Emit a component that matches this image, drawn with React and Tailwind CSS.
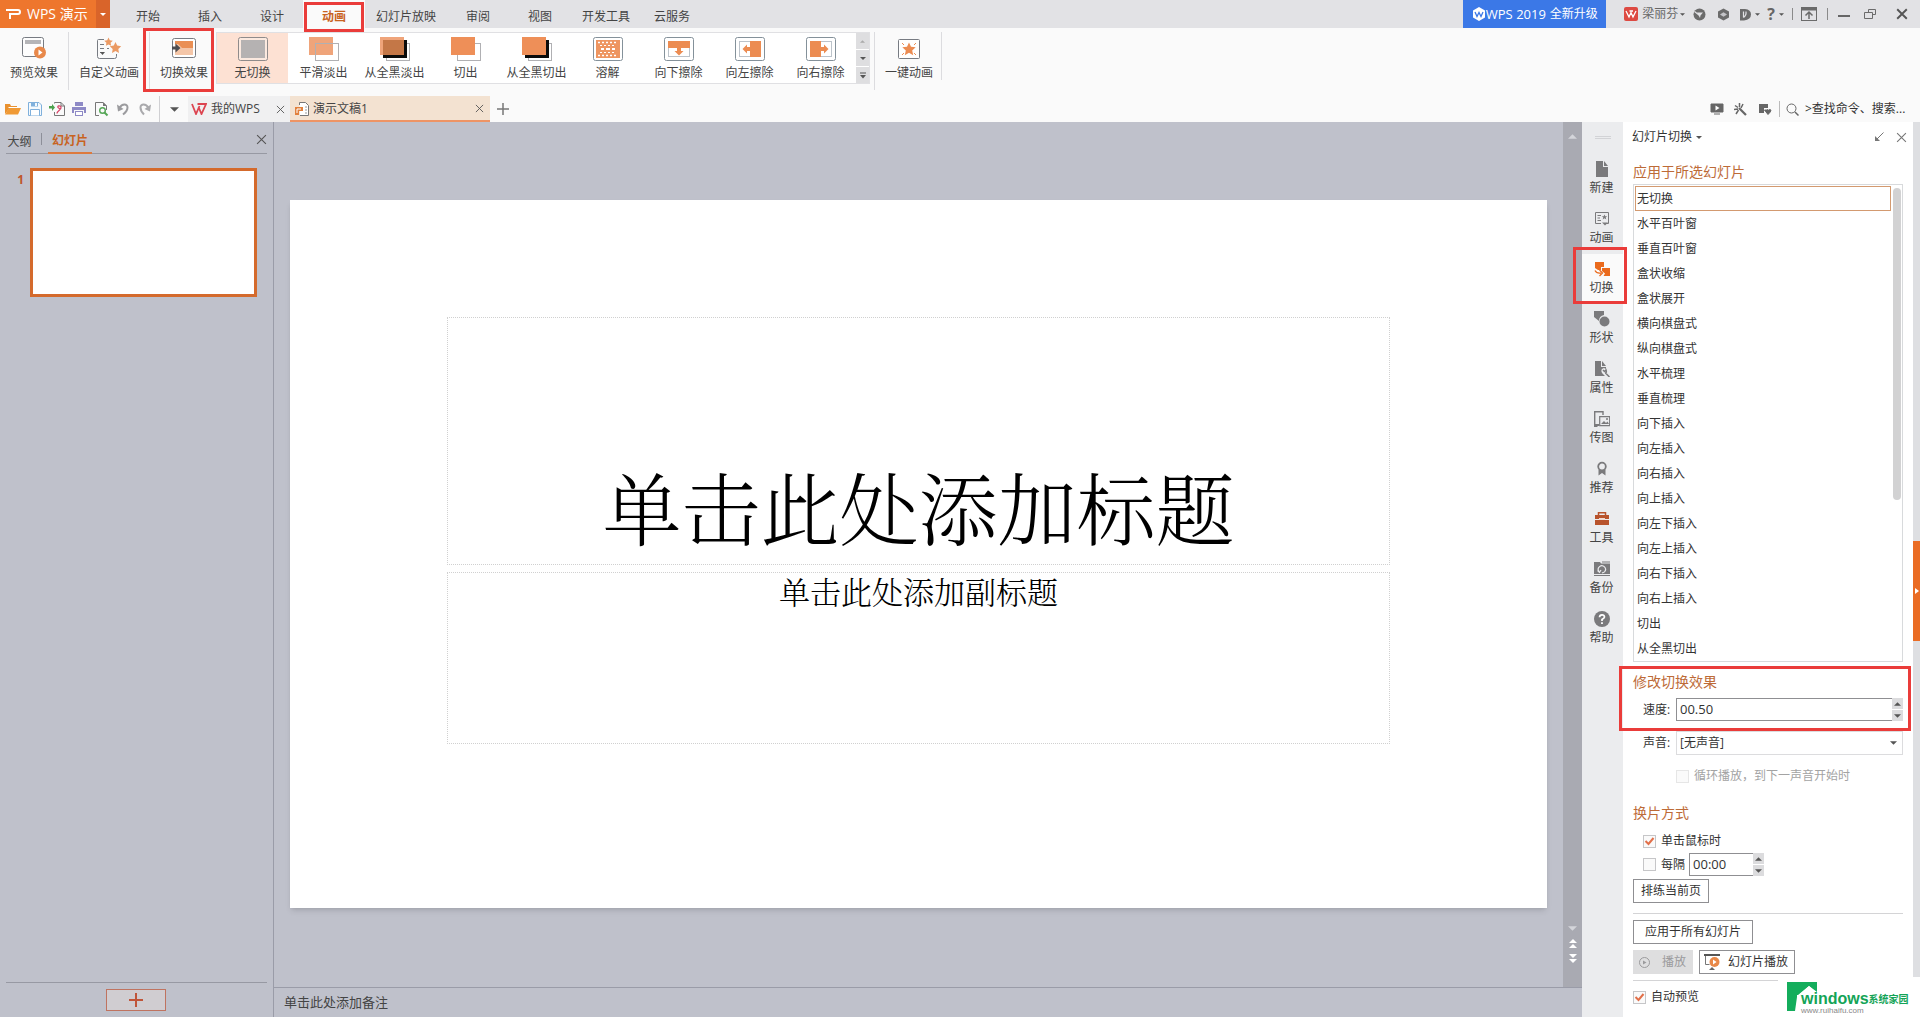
import React from "react";

const DARK = "#6b6b6b";

function Svg({ w = 16, h = 16, vb, children, className = "" }) {
  return (
    <svg width={w} height={h} viewBox={vb || `0 0 ${w} ${h}`} fill="none" className={`shrink-0 ${className}`} aria-hidden="true">
      {children}
    </svg>
  );
}

function Caret({ up = false, w = 7, h = 4, color = "#555" }) {
  return (
    <Svg w={w} h={h} vb="0 0 8 4">
      <path d={up ? "M0 4L4 0L8 4z" : "M0 0L4 4L8 0z"} fill={color} />
    </Svg>
  );
}

function Cross({ size = 10, color = "#555", sw = 1 }) {
  return (
    <Svg w={size} h={size} vb="0 0 10 10">
      <path d="M1 1L9 9M9 1L1 9" stroke={color} strokeWidth={sw} />
    </Svg>
  );
}

/* ---------- ribbon icons, 34 x 26 ---------- */
const Frame = () => <rect x="2.5" y="1.5" width="29" height="23" rx="2" fill="#fff" stroke="#84919a" />;

const ribbonIcons = {
  preview: (
    <>
      <rect x="5.5" y="1.500" width="21" height="19" rx="2" fill="#fdfdfd" stroke="#777b82" />
      <rect x="8" y="4" width="16" height="4" fill="#b5b5b8" />
      <circle cx="23" cy="16.500" r="6" fill="#e8884a" />
      <path d="M21.500 13.500l4 3-4 3z" fill="#fff" />
    </>
  ),
  custom: (
    <>
      <path d="M12 3.500H6.500Q5.500 3.500 5.500 4.500V20.500Q5.500 22.500 7.500 22.500H22.500Q24.500 22.500 24.500 20.500V18" stroke="#777b82" fill="none" />
      <path d="M8 8.500h4M8 12.500h4M15 12.500h2M8 16.500h1" stroke="#777b82" />
      <path d="M8 16h5l-2.500 3z" fill="#555" />
      <path d="M16.500 1.500l1.300 2.800 3 .4-2.200 2.100.5 3-2.600-1.400-2.600 1.400.5-3-2.200-2.100 3-.4z" fill="#eb9a63" />
      <path d="M23.500 6l1.700 3.600 4 .6-2.900 2.800.7 4-3.500-1.900-3.500 1.900.7-4-2.900-2.800 4-.6z" fill="#eb9a63" />
    </>
  ),
  transition: (
    <>
      <rect x="5.500" y="2.500" width="23" height="19" rx="2" fill="#fff" stroke="#777b82" />
      <rect x="8" y="5" width="18" height="14" fill="#f4c6a8" />
      <path d="M8 5h18v7H15l-4-4H8z" fill="#ea8f54" />
      <path d="M5 10.500h3.500V7.500l5 4.500-5 4.500v-3H5z" fill="#4e4e52" />
    </>
  ),
  none: (
    <>
      <rect x="2.500" y="1.500" width="29" height="23" rx="2" fill="#fbe9df" stroke="#8f8b8b" />
      <rect x="5" y="4" width="24" height="18" fill="#b5b2b2" />
    </>
  ),
  smooth: (
    <>
      <rect x="2" y="1" width="24" height="18" fill="#efa47a" />
      <rect x="8.500" y="7.500" width="23" height="17" stroke="#b0b0b3" />
    </>
  ),
  blackFade: (
    <>
      <rect x="8.500" y="7.500" width="23" height="17" stroke="#b0b0b3" fill="#fff" />
      <rect x="5" y="4" width="24" height="18" fill="#0b0b0b" />
      <rect x="2" y="1" width="24" height="18" fill="#efa47a" />
      <rect x="5" y="4" width="21" height="15" fill="#c47747" />
    </>
  ),
  cut: (
    <>
      <rect x="8.500" y="7.500" width="23" height="17" stroke="#b0b0b3" fill="#fff" />
      <rect x="2" y="1" width="24" height="18" fill="#ee8f58" />
    </>
  ),
  blackCut: (
    <>
      <rect x="8.500" y="7.500" width="23" height="17" stroke="#b0b0b3" fill="#fff" />
      <rect x="5" y="4" width="24" height="18" fill="#0b0b0b" />
      <rect x="2" y="1" width="24" height="18" fill="#ee8f58" />
    </>
  ),
  dissolve: (
    <>
      <Frame />
      <rect x="5" y="4" width="24" height="18" fill="#ee9560" />
      <path d="M7 6.500h20M7 19.500h20" stroke="#fff" strokeWidth="1.500" strokeDasharray="2 2" />
      <path d="M9 9.500h16M9 16.500h16" stroke="#fff" strokeWidth="1" strokeDasharray="2 2" />
      <path d="M10 13h3M15 13h4M21 13h3" stroke="#fff" strokeWidth="2" />
    </>
  ),
  wipeDown: (
    <>
      <Frame />
      <rect x="6.500" y="5.500" width="21" height="15" stroke="#bcc3ca" />
      <path d="M6 5h22v7h-9v3h2.500L17 19.500 12.500 15H15v-3H6z" fill="#ec8c52" />
    </>
  ),
  wipeLeft: (
    <>
      <Frame />
      <rect x="6.500" y="5.500" width="21" height="15" stroke="#bcc3ca" />
      <path d="M28 5v16H17v-6h-3v2.500L9.500 13 14 8.500V11h3V5z" fill="#ec8c52" />
    </>
  ),
  wipeRight: (
    <>
      <Frame />
      <rect x="6.500" y="5.500" width="21" height="15" stroke="#bcc3ca" />
      <path d="M6 5v16h11v-6h3v2.500L24.500 13 20 8.500V11h-3V5z" fill="#ec8c52" />
    </>
  ),
  oneKey: (
    <>
      <rect x="6.500" y="3.500" width="21" height="19" rx="1" fill="#fff" stroke="#777b82" />
      <path d="M17 6.500l2 4.300 4.700.5-3.500 3.200 1 4.700-4.200-2.400-4.200 2.400 1-4.700-3.500-3.200 4.700-.5z" fill="#ec8c52" />
      <path d="M10 7l2 2M24 7l-2 2M10 19l2-2M24 19l-2-2" stroke="#ec8c52" />
    </>
  ),
};

function RibbonButton({ icon, label, className = "" }) {
  return (
    <button className={`relative flex flex-col items-center ${className}`}>
      <Svg w={34} h={26}>{ribbonIcons[icon]}</Svg>
      <span className="mt-[3px] whitespace-nowrap leading-4">{label}</span>
    </button>
  );
}

const Divider = ({ className = "bg-[#dcdcdf]" }) => <span className={`w-px shrink-0 ${className}`} />;
const Highlight = ({ className }) => <span className={`pointer-events-none absolute z-10 border-3 border-[#ea3c3a] ${className}`} />;

/* ---------- top bar ---------- */
const menu = [
  ["开始", "w-[62px]"],
  ["插入", "w-[62px]"],
  ["设计", "w-[62px]"],
  ["动画", "w-[62px]"],
  ["幻灯片放映", "w-[82px]"],
  ["审阅", "w-[62px]"],
  ["视图", "w-[62px]"],
  ["开发工具", "w-[70px]"],
  ["云服务", "w-[62px]"],
];

function TitleBar() {
  return (
    <header className="flex h-7 shrink-0 items-stretch bg-[#e2e2e5]">
      <button className="flex w-24 items-center gap-1.5 bg-[#ee762d] pl-1.5 text-sm text-white">
        <Svg w={15} h={14}>
          <path d="M0 3h12q2 0 2 2t-2 2H4v5" stroke="#fff" strokeWidth="2" />
        </Svg>
        <span className="whitespace-nowrap">WPS 演示</span>
      </button>
      <button className="flex w-3.5 items-center justify-center bg-[#d9642a]" aria-label="菜单">
        <Caret w={6} h={3} color="#fff" />
      </button>
      <nav className="ml-[7px] flex">
        {menu.map(([label, width]) => {
          const active = label === "动画";
          return (
            <button key={label} className={`relative ${width} pt-1.5 ${active ? "bg-[#fafafa] font-bold text-[#c8631f]" : "text-[#444]"}`}>
              {label}
              {active && <Highlight className="inset-x-px top-0.5 -bottom-1" />}
            </button>
          );
        })}
      </nav>
      <div className="ml-auto flex items-stretch text-[#666]">
        <button className="mr-[18px] flex w-[143px] items-center justify-center bg-[#3b78e7] text-sm text-white">
          <Svg w={14} h={14}>
            <path d="M7 0l6 3.500v7L7 14l-6-3.500v-7z" fill="#fff" />
            <path d="M3 5l2 4.500 2-4 2 4 2-4.500" stroke="#3b78e7" strokeWidth="1.300" />
          </Svg>
          <span className="text-[13px]">WPS 2019 </span>
          <span className="ml-1 text-xs">全新升级</span>
        </button>
        <button className="flex items-center gap-1">
          <Svg w={14} h={14}>
            <rect width="14" height="14" rx="2" fill="#dd4a42" />
            <path d="M2 4l3 6 2-4.500L9 10l3-6M5.500 4H9" stroke="#fff" strokeWidth="1.300" />
          </Svg>
          <span className="-mr-0.5">梁丽芬</span>
          <Caret w={5} h={3} />
        </button>
        <button className="ml-2 flex w-3.5 items-center" aria-label="皮肤">
          <Svg w={13} h={13}>
            <circle cx="6.500" cy="6.500" r="6" fill={DARK} />
            <path d="M4 4.500h6L7.500 7.500 7 10z" fill="#e2e2e5" />
            <path d="M1.500 3.500L6 7" stroke="#e2e2e5" strokeWidth="1.200" />
          </Svg>
        </button>
        <button className="ml-2.5 flex w-3.5 items-center" aria-label="设置">
          <Svg w={13} h={13}>
            <path d="M6.500 .5l5.500 3v6l-5.500 3-5.500-3v-6z" fill={DARK} />
            <path d="M3 6.500L6.500 4.300l3.500 2.200-3.500 2.200z" fill="#c4c4c8" />
          </Svg>
        </button>
        <button className="ml-2 flex w-5 items-center gap-1" aria-label="工具">
          <Svg w={12} h={13}>
            <path d="M1 1h5q6 .5 6 5.500T5 12.500H1z" fill={DARK} />
            <path d="M4.500 3.500v6M7 3.500q.5 4-2.500 6" stroke="#e2e2e5" strokeWidth="1.200" />
          </Svg>
          <Caret w={5} h={3} />
        </button>
        <button className="ml-2 flex items-center gap-1 text-base font-bold" aria-label="帮助">
          ?<Caret w={5} h={3} />
        </button>
        <Divider className="mr-1.5 ml-2 my-2 bg-[#8a8a8a]" />
        <button className="flex w-5 items-center justify-center" aria-label="折叠功能区">
          <Svg w={16} h={14}>
            <rect x=".5" y=".5" width="15" height="13" stroke={DARK} />
            <path d="M0 2h16" stroke={DARK} strokeWidth="3" />
            <path d="M8 12V5.500M4.500 8.500L8 5l3.500 3.500" stroke={DARK} strokeWidth="1.500" />
          </Svg>
        </button>
        <Divider className="mx-2 my-2 bg-[#8a8a8a]" />
        <button className="flex w-7 items-center pl-0.5" aria-label="最小化">
          <span className="mt-1 h-0.5 w-3 bg-[#666]" />
        </button>
        <button className="flex w-7 items-center" aria-label="还原">
          <Svg w={12} h={10}>
            <path d="M4.500 3V.500H11.500V5.500H8.500M.500 3.500H8.500V9.500H.500z" stroke={DARK} />
          </Svg>
        </button>
        <button className="mr-1 flex w-6 items-center pl-1" aria-label="关闭">
          <Cross size={12} sw={1.6} />
        </button>
      </div>
    </header>
  );
}

/* ---------- ribbon ---------- */
const gallery = [
  ["none", "无切换"],
  ["smooth", "平滑淡出"],
  ["blackFade", "从全黑淡出"],
  ["cut", "切出"],
  ["blackCut", "从全黑切出"],
  ["dissolve", "溶解"],
  ["wipeDown", "向下擦除"],
  ["wipeLeft", "向左擦除"],
  ["wipeRight", "向右擦除"],
];

function Ribbon() {
  return (
    <div className="flex h-[68px] shrink-0 items-start pt-1 text-[#444]">
      <RibbonButton icon="preview" label="预览效果" className="w-[68px] pt-1" />
      <Divider className="h-[58px] bg-[#dcdcdf]" />
      <RibbonButton icon="custom" label="自定义动画" className="w-20 pt-1" />
      <Divider className="h-[58px] bg-[#dcdcdf]" />
      <div className="relative flex w-[66px] justify-center">
        <RibbonButton icon="transition" label="切换效果" className="w-full pt-1 pl-0.5" />
        <Highlight className="-top-1 -left-[7px] h-16 w-[71px]" />
      </div>
      <div className="flex h-[52px] border border-[#e0e0e3] bg-white">
        {gallery.map(([icon, label], i) => (
          <RibbonButton key={icon} icon={icon} label={label} className={`w-[71px] pt-[3px] ${i === 0 ? "bg-[#fde1d3]" : ""}`} />
        ))}
        <div className="flex w-[13px] flex-col bg-[#dedee0]">
          <button className="flex flex-1 items-center justify-center" aria-label="上一行"><Caret up w={5} h={3} color="#aaa" /></button>
          <button className="flex flex-1 items-center justify-center border-y border-white" aria-label="下一行"><Caret w={6} h={3} /></button>
          <button className="flex flex-1 items-center justify-center" aria-label="更多">
            <Svg w={6} h={7}><path d="M0 1h6" stroke="#555" /><path d="M0 3h6L3 6.500z" fill="#555" /></Svg>
          </button>
        </div>
      </div>
      <Divider className="ml-1 h-[58px] bg-[#dcdcdf]" />
      <RibbonButton icon="oneKey" label="一键动画" className="w-[66px] pt-1 pl-0.5" />
      <Divider className="h-12 bg-[#dcdcdf]" />
    </div>
  );
}

/* ---------- quick access bar ---------- */
const quick = [
  ["打开", <><path d="M0 13V3h5l1 2h6v3H4z" fill="#e9912f" /><path d="M4 7h12l-3 6.500H0z" fill="#f09a35" /><path d="M3.500 6.500h9" stroke="#fff" /></>],
  ["保存", <><path d="M1.500 1.500H12L14.500 4V14.500H1.500z" fill="#f4f9fd" stroke="#7fb0dc" /><path d="M4 1h7v4.500H4z" fill="#7fb0dc" /><path d="M8 2h2v3H8z" fill="#f4f9fd" /><path d="M3.500 14.500V8.500h9v6" stroke="#7fb0dc" fill="#fff" /></>],
  ["输出为PDF", <><path d="M5.500 2.500V1.500H12L15.500 5V14.500H5.500V11" stroke="#777" /><path d="M12 1.500V5h3.500" stroke="#777" /><path d="M0 5h3V3l3 3.500L3 10V7.500H0z" fill="#4da24e" /><path d="M8 12.500c0-3 5-4 4-6.500-1-2-4-1-3 .5s3 1 3 1" stroke="#d8466a" strokeWidth="1.300" /></>],
  ["打印", <><rect x="4" y="1" width="8" height="4" fill="#8e8ac6" /><path d="M1 6h14v6h-2V9H3v3H1z" fill="#8e8ac6" /><rect x="4.500" y="10.500" width="7" height="4" fill="#fff" stroke="#8e8ac6" /></>],
  ["打印预览", <><path d="M6 14.500H2.500V1.500H10L13.500 5v4" stroke="#777" /><path d="M10 1v4h4z" fill="#777" /><circle cx="9.500" cy="9.500" r="2.800" stroke="#55a656" strokeWidth="1.400" /><path d="M11.500 11.500l3 3" stroke="#55a656" strokeWidth="2" /></>],
  ["撤销", <><path d="M4.500 7C7 2.500 12.500 2.500 12.500 6.500Q12.500 10 8 13.500" stroke="#9b9b9e" strokeWidth="2" /><path d="M2 3.500L3 10.500 8.500 8z" fill="#9b9b9e" /></>],
  ["恢复", <><path d="M11.500 7C9 2.500 3.500 2.500 3.500 6.500Q3.500 10 7 13.500" stroke="#a9a9ac" strokeWidth="2" /><path d="M14 3.500L13 10.500 7.500 8z" fill="#a9a9ac" /></>],
];

function QuickBar() {
  return (
    <div className="flex h-[26px] shrink-0 items-stretch text-[#444]">
      <div className="flex items-center gap-1.5 pl-[5px]">
        {quick.map(([label, art]) => (
          <button key={label} aria-label={label}><Svg w={16} h={16}>{art}</Svg></button>
        ))}
      </div>
      <Divider className="ml-1.5 bg-[#d0d0d3]" />
      <button className="flex w-7 items-center justify-center" aria-label="自定义快速访问"><Caret w={9} h={5} /></button>
      <div className="flex w-[102px] items-center bg-[#f0f0f1] px-[3px]">
        <button className="flex items-center gap-1">
          <Svg w={16} h={12}>
            <path d="M1 1l4 10L8.500 3M6.500 1H15l-4.500 10L7.500 4" stroke="#dc4450" strokeWidth="1.800" />
          </Svg>
          <span>我的WPS</span>
        </button>
        <button className="mr-0.5 ml-auto" aria-label="关闭我的WPS"><Cross size={9} /></button>
      </div>
      <div className="flex w-[200px] items-center border-b-2 border-[#ee9465] bg-[#f3e2d1] px-1">
        <button className="flex items-center gap-1 pt-0.5">
          <Svg w={15} h={16}>
            <path d="M5.500 4V1.500H11.500L14.500 4.500V14.500H6" stroke="#777" fill="#fff" />
            <path d="M11 6h2M11 9h2M11 12h2" stroke="#999" />
            <path d="M1 6h8v4H5v4H1z" fill="#e2803c" />
            <path d="M3 12V8h4" stroke="#fff" />
          </Svg>
          <span>演示文稿1</span>
        </button>
        <button className="ml-auto mr-0.5" aria-label="关闭演示文稿1"><Cross size={9} /></button>
      </div>
      <button className="ml-1.5 flex items-center" aria-label="新建">
        <Svg w={14} h={14}><path d="M7 1v12M1 7h12" stroke="#777" strokeWidth="1.500" /></Svg>
      </button>
      <div className="ml-auto flex items-center">
        <button className="w-6" aria-label="播放">
          <Svg w={14} h={12}><path d="M1 1h12v8H1zM4 11h6" fill="#666" stroke="#666" /><path d="M5.500 2.500L9.500 5l-4 2.500z" fill="#fff" /></Svg>
        </button>
        <button className="w-6" aria-label="魔法棒">
          <Svg w={13} h={13}><path d="M5 5l7 7" stroke="#666" strokeWidth="2.200" /><path d="M5.500 0v4M1 2.500l3 2M0 6.500l4-.5M2 11l2.500-4M7 5l2-4" stroke="#666" strokeWidth="1.500" /></Svg>
        </button>
        <button className="w-[21px]" aria-label="选择">
          <Svg w={14} h={12}><path d="M1 1h9v4H6v5H1z" fill="#666" /><path d="M6.500 7h2q1.200-1 1.800.3.700-1.300 2.700-.3 0 1.800-3 4.500z" fill="#666" stroke="#666" /></Svg>
        </button>
        <Divider className="h-4 bg-[#bbb]" />
        <label className="ml-1.5 flex items-center gap-1.5">
          <Svg w={13} h={13}><circle cx="5.500" cy="5.500" r="4.500" stroke="#666" /><path d="M9 9l3.500 3.500" stroke="#666" strokeWidth="1.500" /></Svg>
          <input className="w-[115px] bg-transparent outline-none placeholder:text-[#333]" placeholder=">查找命令、搜索..." aria-label="查找命令" />
        </label>
      </div>
    </div>
  );
}

/* ---------- left panel ---------- */
function SlidesPanel() {
  return (
    <aside className="flex w-[274px] shrink-0 flex-col border-r border-[#9a9ca8] px-1.5">
      <div className="flex h-8 items-end border-b border-[#9799a3]">
        <button className="mb-[3px] w-[35px] pr-2 text-[#444]">大纲</button>
        <span className="mb-2 h-3 w-px bg-[#8d8f99]" />
        <button className="-mb-px ml-1.5 border-b-2 border-[#dd7a3e] px-1 pb-[3px] font-bold text-[#c8631f]">幻灯片</button>
        <button className="mb-2 ml-auto" aria-label="关闭面板"><Cross size={11} /></button>
      </div>
      <div className="flex flex-1 pt-3.5">
        <span className="w-6 pt-1 pr-1.5 text-right font-bold text-[#c0552a]">1</span>
        <button className="h-[129px] flex-1 border-3 border-[#d46a2c] bg-white" aria-label="幻灯片 1" />
        <span className="w-2.5" />
      </div>
      <div className="flex h-[35px] justify-center border-t border-[#9799a3] pt-1.5 pr-0.5">
        <button className="flex h-[22px] w-[60px] items-center justify-center border border-[#bf7360] bg-[#d0cdd1]" aria-label="新建幻灯片">
          <Svg w={14} h={14}><path d="M7 0v14M0 7h14" stroke="#c0553a" strokeWidth="2" /></Svg>
        </button>
      </div>
    </aside>
  );
}

/* ---------- canvas ---------- */
function Canvas() {
  return (
    <main className="flex min-w-0 flex-1 flex-col">
      <div className="flex flex-1">
        <div className="flex flex-1 pt-[78px] pr-4 pb-[79px] pl-4">
          <section className="flex flex-1 flex-col bg-white px-[12.5%] shadow-md">
            <div className="h-[16.5%]" />
            <div className="flex h-[35%] items-end justify-center border border-dotted border-[#d0d0d0] pb-2.5">
              <h1 className="whitespace-nowrap text-[79px] leading-[96px] font-light text-black [font-family:'Noto_Serif_CJK_SC','Noto_Sans_CJK_SC',serif]">单击此处添加标题</h1>
            </div>
            <div className="h-[1%]" />
            <div className="flex h-[24.4%] justify-center border border-dotted border-[#d0d0d0]">
              <h2 className="text-[31px] leading-9 font-light text-black [font-family:'Noto_Serif_CJK_SC','Noto_Sans_CJK_SC',serif]">单击此处添加副标题</h2>
            </div>
          </section>
        </div>
        <div className="flex w-[19px] flex-col items-center bg-[#a9aab2] py-3">
          <button aria-label="向上滚动"><Caret up w={9} h={5} color="#d4d5da" /></button>
          <div className="flex-1" />
          <button className="mb-2" aria-label="向下滚动"><Caret w={9} h={5} color="#d4d5da" /></button>
          <button className="mb-1.5" aria-label="上一张">
            <Svg w={8} h={9}><path d="M0 4L4 0l4 4zM0 9l4-4 4 4z" fill="#fff" /></Svg>
          </button>
          <button className="mb-3" aria-label="下一张">
            <Svg w={8} h={9}><path d="M0 0h8L4 4zM0 5h8L4 9z" fill="#fff" /></Svg>
          </button>
        </div>
      </div>
      <div className="h-[30px] border-t border-[#9a9ca8] pt-1 pl-2.5 text-[13px] leading-5 text-[#444]">单击此处添加备注</div>
    </main>
  );
}

/* ---------- side rail, icons 16 x 16 ---------- */
const G = "#7a7a7c";
const rail = [
  ["新建", <><path d="M2 0h7v6h5v10H2z" fill={G} /><path d="M10 0l4 5h-4z" fill={G} /></>],
  ["动画", <><path d="M10 12.500h4.500v-11H1.500v11H7" stroke={G} /><path d="M3.500 4.500H7M3.500 7H6M3.500 9.500H7" stroke={G} /><path d="M10.500 3.500l.8 1.800h1.900l-1.500 1.200.6 2-1.800-1.200-1.800 1.200.6-2-1.500-1.200h1.900z" fill={G} /><path d="M8 11.500h6L11 14.500z" fill={G} /></>],
  ["切换", <><path d="M1 1h9v5H7v3H4L1 7z" fill="#ea6a1c" /><path d="M8 7h8v8H9.500l1.500-2.500L8 10z" fill="#ea6a1c" /><path d="M1 9.500q1.500 3.200 6 2.500M5.500 9l3 3-3 3" stroke="#ea6a1c" strokeWidth="1.300" /></>],
  ["形状", <><path d="M0 0h10v4Q5 5 5 10L0 6z" fill={G} /><circle cx="10.500" cy="10.500" r="5" fill={G} /></>],
  ["属性", <><path d="M1 0h6v6h5v2l-2-1q-4 1-2 5l3 3H1z" fill={G} /><path d="M8 0l4 5H8z" fill={G} /><path d="M9 9l1.500 1.500L12 9q1 3-1 3M11.500 12l4 4" stroke={G} strokeWidth="1.500" /></>],
  ["传图", <><path d="M3.500 15.500H.700V.700H9V4" stroke={G} strokeWidth="1.400" /><path d="M1 14h4" stroke={G} strokeWidth="2" /><path d="M5.700 5.700h10v9h-10z" stroke={G} strokeWidth="1.200" /><path d="M7 13l3-3 2 2 1.500-1.500L15 13z" fill={G} /><circle cx="13" cy="8" r="1" fill={G} /></>],
  ["推荐", <><path d="M4.500 8.500h7V14.500L8 12 4.500 14.500z" fill={G} /><circle cx="8" cy="5.500" r="3.800" stroke={G} strokeWidth="1.800" fill="#ebecee" /></>],
  ["工具", <><path d="M4.500 5V1.700h7V5" stroke="#b8532c" strokeWidth="1.500" /><path d="M1 4h14v4H1zM1 9h14v5H1z" fill="#b8532c" /><path d="M5 8h6" stroke="#f2d9cf" strokeWidth="2" /></>],
  ["备份", <><path d="M0 1h6l1 1.500h9V13H0z" fill={G} /><path d="M8 1h8" stroke={G} /><path d="M5 10.500a3.600 3.600 0 1 1 5.500.3M3.500 9.500l2 1.800L7 9M8 12l2.500-1" stroke="#ebecee" strokeWidth="1.200" /><path d="M0 14.500h16" stroke={G} /></>],
  ["帮助", <><circle cx="8" cy="8" r="8" fill={G} /><path d="M5.500 6.200Q5.700 3.800 8 3.800t2.500 2.200Q10.500 7 8 8.500V10" stroke="#fff" strokeWidth="1.700" /><path d="M7.100 11.200h1.800V13H7.100z" fill="#fff" /></>],
];

function Rail() {
  return (
    <nav className="flex w-[41px] shrink-0 flex-col bg-[#ebecee]">
      <div className="flex h-8 justify-center pt-3.5">
        <span className="h-[3px] w-4 border-y border-[#d2d3d6]" />
      </div>
      {rail.map(([label, art]) => {
        const active = label === "切换";
        return (
          <button key={label} className={`relative flex h-[50px] flex-col items-center pt-[7px] pr-0.5 text-[#444] ${active ? "bg-[#fafafa]" : ""}`}>
            <Svg w={16} h={16}>{art}</Svg>
            <span className="mt-[3px] leading-4">{label}</span>
            {active && <Highlight className="-top-[7px] right-[-4px] bottom-0 -left-[9px]" />}
          </button>
        );
      })}
    </nav>
  );
}

/* ---------- task pane ---------- */
const effects = ["无切换", "水平百叶窗", "垂直百叶窗", "盒状收缩", "盒状展开", "横向棋盘式", "纵向棋盘式", "水平梳理", "垂直梳理", "向下插入", "向左插入", "向右插入", "向上插入", "向左下插入", "向左上插入", "向右下插入", "向右上插入", "切出", "从全黑切出"];

function Check({ label, checked = false, disabled = false, className = "" }) {
  return (
    <label className={`flex items-center gap-[5px] ${disabled ? "text-[#a3a3a3]" : ""} ${className}`}>
      <span className="relative flex">
        <input type="checkbox" defaultChecked={checked} disabled={disabled} className="peer size-[13px] appearance-none border border-[#c6c6c8] bg-[#fafafa] disabled:border-[#e6e6e6]" />
        <span className="pointer-events-none absolute inset-0 hidden items-center justify-center peer-checked:flex">
          <Svg w={11} h={10}><path d="M1.500 5L4.500 8 9.500 2" stroke="#e2704a" strokeWidth="2" /></Svg>
        </span>
      </span>
      {label}
    </label>
  );
}

function Stepper({ label, value, className = "" }) {
  return (
    <span className={`flex h-[23px] ${className}`}>
      <input defaultValue={value} aria-label={label} className="w-0 flex-1 border border-r-0 border-[#8f8f92] bg-white pl-[3px] text-[13px] outline-none" />
      <span className="flex w-[11px] flex-col bg-[#dcdcde]">
        <button className="flex flex-1 items-center justify-center" aria-label="增加"><Caret up w={7} h={4} /></button>
        <button className="flex flex-1 items-center justify-center border-t border-white" aria-label="减少"><Caret w={7} h={4} /></button>
      </span>
    </span>
  );
}

const Heading = ({ children, className = "" }) => <h3 className={`text-sm leading-5 text-[#bd6b38] ${className}`}>{children}</h3>;
const outlineButton = "h-6 border border-[#8f8f92] bg-white";

function TaskPane() {
  return (
    <aside className="flex w-[290px] shrink-0 flex-col bg-white px-2.5 text-[#333]">
      <div className="flex h-[30px] items-center">
        <button className="-ml-px flex items-center gap-1">幻灯片切换 <Caret w={6} h={3} /></button>
        <button className="ml-auto" aria-label="浮动窗格">
          <Svg w={10} h={10}><path d="M9.500.500L3 7" stroke="#777" /><path d="M1 4v5h5z" fill="#777" /></Svg>
        </button>
        <button className="-mr-1 ml-3" aria-label="关闭窗格"><Cross size={11} color="#777" /></button>
      </div>
      <Heading className="mt-2.5">应用于所选幻灯片</Heading>
      <div className="mt-0.5 flex border border-[#d8dadc] px-px pt-px">
        <ul className="flex-1" role="listbox" aria-label="切换效果">
          {effects.map((name, i) => (
            <li key={name} role="option" aria-selected={i === 0} className={`flex h-[25px] items-center border pl-px ${i === 0 ? "border-[#d39a70]" : "border-transparent"}`}>
              {name}
            </li>
          ))}
        </ul>
        <span className="mt-0.5 ml-0.5 h-[312px] w-2 rounded-full bg-[#d2d2d3]" />
      </div>
      <section className="relative mt-2.5 pb-2.5">
        <Highlight className="-top-1.5 -right-2 bottom-0 -left-3.5" />
        <Heading>修改切换效果</Heading>
        <div className="mt-1.5 flex items-center">
          <span className="w-[43px] pl-2.5">速度:</span>
          <Stepper label="速度" value="00.50" className="flex-1" />
        </div>
      </section>
      <label className="flex items-center">
        <span className="w-[43px] pl-2.5">声音:</span>
        <span className="relative flex flex-1 items-center">
          <select className="h-6 w-full appearance-none border border-[#dcdcde] bg-white pl-[3px] outline-none">
            <option>[无声音]</option>
          </select>
          <span className="pointer-events-none absolute right-1.5"><Caret w={7} h={4} /></span>
        </span>
      </label>
      <Check label="循环播放，到下一声音开始时" disabled className="mt-[11px] ml-[43px] h-5" />
      <Heading className="mt-[17px]">换片方式</Heading>
      <Check label="单击鼠标时" checked className="mt-2 ml-2.5 h-5" />
      <div className="mt-0.5 flex items-center gap-1">
        <Check label="每隔" className="ml-2.5" />
        <Stepper label="每隔时间" value="00:00" className="w-[75px]" />
      </div>
      <button className={`mt-[3px] w-[76px] ${outlineButton}`}>排练当前页</button>
      <hr className="mt-2.5 border-[#d4d4d6]" />
      <button className={`mt-1.5 w-[120px] ${outlineButton}`}>应用于所有幻灯片</button>
      <div className="mt-1.5 flex gap-1.5">
        <button disabled className="flex h-6 w-[60px] items-center gap-3 bg-[#dededf] pl-1.5 text-[#9a9a9c]">
          <Svg w={11} h={11}><circle cx="5.500" cy="5.500" r="5" stroke="#9a9a9c" /><path d="M4 3.500L7.500 5.500 4 7.500z" fill="#9a9a9c" /></Svg>
          播放
        </button>
        <button className={`flex w-24 items-center gap-2 pl-1 ${outlineButton}`}>
          <Svg w={16} h={16}>
            <path d="M0 1h16" stroke="#555" strokeWidth="2" />
            <path d="M1.500 2v8.500h4" stroke="#777" />
            <path d="M5 16l3-3 3 3z" fill="#666" />
            <circle cx="10.500" cy="8" r="5" fill="#e88848" />
            <path d="M9 5.500L12.500 8 9 10.500z" fill="#fff" />
          </Svg>
          幻灯片播放
        </button>
      </div>
      <hr className="mt-1.5 border-[#d4d4d6]" />
      <Check label="自动预览" checked className="mt-1.5 h-5" />
    </aside>
  );
}

function Watermark() {
  return (
    <div className="absolute right-0 bottom-0 flex h-10 w-[142px] items-start bg-white pt-[5px] pl-[9px]">
      <Svg w={30} h={29}>
        <path d="M0 0h30v10l-8-6-11 9h-1v2L8 29H0z" fill="#14ad5c" />
        <path d="M13 12l9-8 8 7v5H12z" fill="#fff" />
      </Svg>
      <div className="-ml-4 pt-[9px] whitespace-nowrap">
        <div className="flex items-center leading-4">
          <span className="text-base leading-4 font-bold text-[#14a457] [font-family:'Liberation_Sans',sans-serif]">windows</span>
          <span className="text-[10px] font-bold text-[#14a457]">系统家园</span>
        </div>
        <div className="text-[8px] leading-2 text-[#888] [font-family:'Liberation_Sans',sans-serif]">www.ruihaifu.com</div>
      </div>
    </div>
  );
}

export default function App() {
  return (
    <div className="relative flex h-screen flex-col overflow-hidden bg-[#fafafa] text-xs [font-family:'Open_Sans','Noto_Sans_CJK_SC',sans-serif]">
      <TitleBar />
      <Ribbon />
      <QuickBar />
      <div className="flex min-h-0 flex-1 bg-[#bfc1cb]">
        <SlidesPanel />
        <Canvas />
        <Rail />
        <TaskPane />
        <div className="flex w-[7px] shrink-0 flex-col bg-[#dedfe2] pt-[419px]">
          <button className="flex h-[100px] items-center justify-center bg-[#ea6c24]" aria-label="展开">
            <Svg w={4} h={6}><path d="M0 0l4 3-4 3z" fill="#fff" /></Svg>
          </button>
        </div>
      </div>
      <Watermark />
    </div>
  );
}
